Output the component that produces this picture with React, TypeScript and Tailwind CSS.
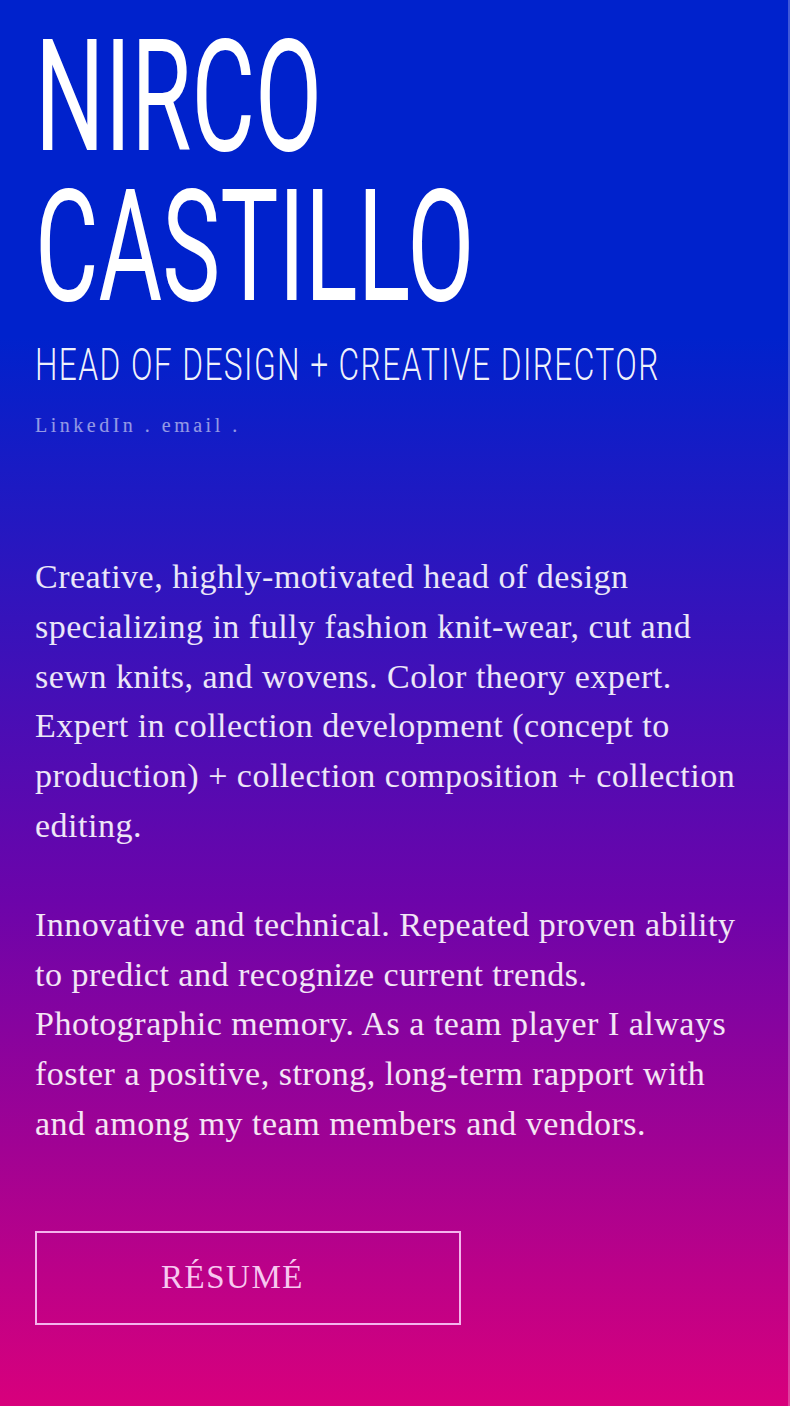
const SUMMARY = [
  "Creative, highly-motivated head of design specializing in fully fashion knit-wear, cut and sewn knits, and wovens. Color theory expert. Expert in collection development (concept to production) + collection composition + collection editing.",
  "Innovative and technical. Repeated proven ability to predict and recognize current trends. Photographic memory. As a team player I always foster a positive, strong, long-term rapport with and among my team members and vendors.",
];

export default function App() {
  return (
    <main className="min-h-[1406px] w-full overflow-hidden border-r-2 border-white/25 bg-linear-to-b/srgb from-[#0022cc] from-[24%] via-[#6c04aa] via-[64%] to-[#d8007c] px-[35px] pb-[80px] pt-[22px] text-white">
      <h1 className="origin-left scale-x-[0.63] whitespace-nowrap font-['Roboto',sans-serif] text-[155px] font-normal leading-[150px] text-white">
        <span className="block">NIRCO</span>
        <span className="block">CASTILLO</span>
      </h1>

      <p className="mt-[20px] origin-left scale-x-[0.705] whitespace-nowrap font-['Roboto',sans-serif] text-[45px] font-light leading-[45px] tracking-[2px] text-white/95">
        HEAD OF DESIGN + CREATIVE DIRECTOR
      </p>

      <p className="mt-[28px] font-['Liberation_Serif',serif] text-[20px] leading-[20px] tracking-[3.5px] text-white/55">
        <a href="#">LinkedIn .</a> <a href="#">email .</a>
      </p>

      <section className="mt-[117px] flex flex-col gap-[49px] font-['Liberation_Serif',serif] text-[34px] leading-[49.8px] tracking-[0.5px] text-white/90">
        {SUMMARY.map((para) => (
          <p key={para.slice(0, 12)}>{para}</p>
        ))}
      </section>

      <a
        href="#"
        className="mt-[82px] flex h-[94px] w-[426px] items-center justify-center border-2 border-[#f4b4ec] pr-[31px] font-['Liberation_Serif',serif] text-[33px] tracking-[1.5px] text-[#f7c8f0]"
      >
        RÉSUMÉ
      </a>
    </main>
  );
}
